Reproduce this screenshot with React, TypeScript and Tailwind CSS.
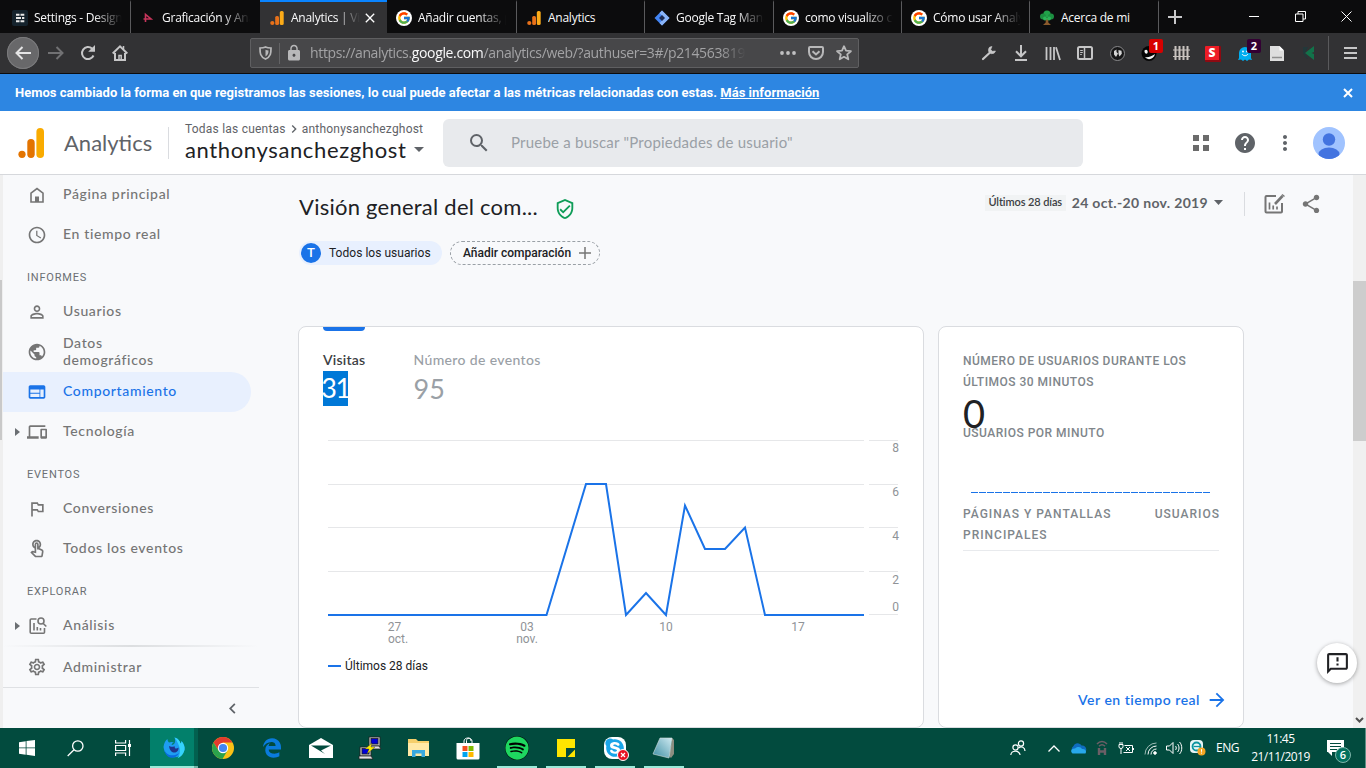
import React from "react";
import {
  MdAccessTime, MdArrowForward, MdChevronLeft, MdChevronRight, MdDevices, MdHelp, MdMoreVert,
  MdOutlineFeedback, MdOutlinedFlag, MdOutlineSettings, MdOutlineTouchApp, MdOutlineVerifiedUser,
  MdPersonOutline, MdPublic, MdSearch, MdShare, MdWeb, MdClose, MdLock,
} from "react-icons/md";
import { FcGoogle } from "react-icons/fc";
import { FaSpotify, FaSkype } from "react-icons/fa";
import { FaEdgeLegacy } from "react-icons/fa6";

const G = "font-['Lato','Open_Sans',sans-serif]";
const R = "font-['Roboto','Liberation_Sans',sans-serif]";
const S = "font-['Open_Sans','Noto_Sans',sans-serif]";

/* ---------- tab icons ---------- */
const GaSmall = () => (
  <svg width="14" height="16" viewBox="0 0 14 16"><circle cx="2.3" cy="13" r="2.1" fill="#e8711a" /><rect x="5.2" y="6" width="3.8" height="9" rx="1.5" fill="#e8711a" /><rect x="9.8" y="1" width="3.9" height="14" rx="1.5" fill="#fbab18" /></svg>
);
const SettingsFav = () => (
  <svg width="16" height="16"><rect width="16" height="16" rx="2" fill="#15232d" /><path d="M4 4.800h3.500M8.500 4.800h3.800M4 8h5M10 8h2.300M4 11.200h3.500M8.500 11.200h3.800" stroke="#e8e8e8" strokeWidth="2" /></svg>
);
const ArrowFav = () => (
  <svg width="16" height="16"><path d="M5.500 12V4.500L11 9H3.500" stroke="#c8355b" strokeWidth="1.600" fill="none" /></svg>
);
const GoogleFav = () => (
  <span className="flex h-4 w-4 items-center justify-center rounded-full bg-white"><FcGoogle size={14} /></span>
);
const TagFav = () => (
  <svg width="16" height="16"><path d="M8 .5 15.500 8 8 15.500.5 8z" fill="#4285f4" /><path d="M8 .5 15.500 8 8 15.500 5.500 13 10.500 8 5.500 3z" fill="#8ab4f8" /><path d="M8 5l3 3-3 3-3-3z" fill="#1c2c55" /></svg>
);
const TreeFav = () => (
  <svg width="16" height="16"><path d="M6.700 8h2.600v4.500L12 15H4l2.700-2.500z" fill="#8a5a2c" /><circle cx="8" cy="4" r="3.600" fill="#21a34a" /><circle cx="4" cy="6.500" r="3" fill="#1c8f40" /><circle cx="12" cy="6.500" r="3" fill="#1c8f40" /><circle cx="6" cy="8.500" r="2" fill="#2bb457" /><circle cx="10" cy="8.500" r="2" fill="#2bb457" /></svg>
);

type TabProps = { w: string; icon: React.ReactNode; text: string; active?: boolean; line?: boolean; first?: boolean; tw: string };
const Tab = ({ w, icon, text, active, line, first, tw }: TabProps) => (
  <div className={`${w} ${active ? "border-t-2 border-t-[#0a84ff] bg-[#323234]" : "border-t-2 border-t-transparent"} ${line ? "border-r border-r-[#5a5a5c]" : ""} ${first ? "pl-3" : "pl-[9px]"} flex h-[33px] shrink-0 items-center gap-1.5`}>
    <span className="flex h-4 w-4 shrink-0 items-center justify-center">{icon}</span>
    <span className={`${tw} overflow-hidden whitespace-nowrap text-[12px] leading-4 tracking-[-0.25px] text-[#f9f9fa]`}>{text}</span>
    {active && <MdClose size={16} className="-ml-1 text-white" />}
  </div>
);
const FADE = "w-[88px] [mask-image:linear-gradient(to_right,black_68%,transparent_100%)]";

const TabBar = () => (
  <div className={`${S} flex h-[33px] shrink-0 bg-[#0c0c0d]`}>
    <Tab w="w-[131px]" first line icon={<SettingsFav />} text="Settings - Design" tw={FADE} />
    <Tab w="w-[129px]" icon={<ArrowFav />} text="Graficación y Aná" tw={FADE} />
    <Tab w="w-[127px]" active icon={<GaSmall />} text="Analytics | Visi" tw="w-[69px] [mask-image:linear-gradient(to_right,black_66%,transparent_100%)]" />
    <Tab w="w-[130px]" line icon={<GoogleFav />} text="Añadir cuentas, pro" tw={FADE} />
    <Tab w="w-[128px]" line icon={<GaSmall />} text="Analytics" tw="w-[90px]" />
    <Tab w="w-[129px]" line icon={<TagFav />} text="Google Tag Mana" tw={FADE} />
    <Tab w="w-[128px]" line icon={<GoogleFav />} text="como visualizo co" tw={FADE} />
    <Tab w="w-[128px]" line icon={<GoogleFav />} text="Cómo usar Analy" tw={FADE} />
    <Tab w="w-[129px]" line icon={<TreeFav />} text="Acerca de mi" tw="w-[90px]" />
    <div className="flex flex-1 items-center">
      <svg className="ml-[9px]" width="14" height="14"><path d="M7 0v14M0 7h14" stroke="#c8c8c9" strokeWidth="2" /></svg>
      <svg className="ml-[67px]" width="10" height="12"><path d="M0 5.500h10" stroke="#fff" /></svg>
      <svg className="ml-[36px]" width="11" height="11"><path d="M.5 3h7.500v7.500H.5zM3 3V.5h7.500V8H8" stroke="#fff" fill="none" /></svg>
      <svg className="ml-[35px]" width="11" height="11"><path d="M.5.5l10 10M10.500.5l-10 10" stroke="#fff" /></svg>
    </div>
  </div>
);

const Slot = ({ children }: { children: React.ReactNode }) => (
  <div className="relative flex h-10 w-8 shrink-0 items-center justify-center">{children}</div>
);

const Toolbar = () => (
  <div className={`${S} flex h-[41px] shrink-0 items-center border-b border-[#0c0c0d] bg-[#323234]`}>
    <div className="ml-[7px] flex h-8 w-8 items-center justify-center rounded-full bg-[#68686a] shadow-[inset_0_0_0_1px_#7b7b7d]">
      <svg width="16" height="14" fill="none" stroke="#e4e4e5" strokeWidth="2"><path d="M16 7H1.500M7.500 1l-6 6 6 6" /></svg>
    </div>
    <div className="ml-px flex">
      <Slot><svg width="16" height="14" fill="none" stroke="#717173" strokeWidth="2"><path d="M0 7h14.500M8.500 1l6 6-6 6" /></svg></Slot>
      <Slot><svg width="16" height="16" fill="none" stroke="#c6c6c7" strokeWidth="2"><path d="M13.500 10.500A6 6 0 1 1 12 3.600l2 2" /><path d="M15 0v6.800H8.200z" fill="#c6c6c7" stroke="none" /></svg></Slot>
      <Slot><svg width="16" height="16" fill="none" stroke="#c6c6c7" strokeWidth="2"><path d="M.7 8.500 8 1.400l7.300 7.100" /><path d="M3 8v7h10V8" /><path d="M7 15v-4.500h2.200V15M11.500 1v3" strokeWidth="1.500" /></svg></Slot>
    </div>
    <div className="ml-[114px] flex h-[30px] w-[609px] items-center rounded-[2px] border border-[#5f5f61] bg-[#474749]">
      <svg className="ml-[8px]" width="13" height="14" fill="none"><path d="M6.500 1c2 1 3.500 1 5.500 1 0 5 0 8.500-5.500 11C1 10.500 1 7 1 2c2 0 3.500 0 5.500-1z" stroke="#b8b8b9" strokeWidth="1.700" /><path d="M6.500 3.800c1 .4 1.800.5 3 .6 0 2.800-.5 4.600-3 6z" fill="#b8b8b9" /></svg>
      <div className="ml-[7px] h-[21px] w-px bg-[#636365]" />
      <MdLock size={18} className="ml-[5px] text-[#b8b8b9]" />
      <div className="ml-[7px] w-[436px] overflow-hidden whitespace-nowrap text-[14px] leading-5 tracking-[-0.35px] text-[#a3a3a5] [mask-image:linear-gradient(to_right,black_94%,transparent_100%)]">
        https://analytics.<span className="text-[#f9f9fa]">google.com</span>/analytics/web/?authuser=3#/p214563819
      </div>
      <svg className="ml-[34px]" width="16" height="4" fill="#c0c0c1"><circle cx="2" cy="2" r="1.900" /><circle cx="8" cy="2" r="1.900" /><circle cx="14" cy="2" r="1.900" /></svg>
      <svg className="ml-[12px]" width="16" height="14" fill="none" stroke="#b8b8b9" strokeWidth="2"><path d="M2 1h12c.6 0 1 .4 1 1v4a7 7 0 0 1-14 0V2c0-.6.4-1 1-1z" /><path d="M4.500 5.200 8 8.500l3.500-3.300" /></svg>
      <svg className="ml-[12px]" width="16" height="16" fill="none" stroke="#b8b8b9" strokeWidth="1.800" strokeLinejoin="round"><path d="M8 1.200l2 4.500 4.900.5-3.700 3.200 1.100 4.900L8 11.800l-4.300 2.500 1.100-4.900L1.100 6.200 6 5.700z" /></svg>
    </div>
    <div className="ml-[114px] flex">
      <Slot><svg width="16" height="16" fill="none" stroke="#c6c6c7"><path d="M2 14l6.500-6" strokeWidth="2.200" strokeLinecap="round" /><path d="M11 1.500A3.600 3.600 0 1 0 14.500 6l-3 .3-1.800-1.700z" fill="#c6c6c7" strokeWidth=".6" /></svg></Slot>
      <Slot><svg width="14" height="16" fill="none" stroke="#c6c6c7" strokeWidth="2"><path d="M7 0v11M2 6.300l5 5 5-5M1 15h12" /></svg></Slot>
      <Slot><svg width="16" height="15" fill="none" stroke="#c6c6c7" strokeWidth="1.800"><path d="M1.500 1v13M5.500 1v13M9 1v13M11 1.200 15 14" /></svg></Slot>
      <Slot><svg width="16" height="14" fill="none" stroke="#c6c6c7"><rect x="1" y="1" width="14" height="12" rx="1.500" strokeWidth="2" /><path d="M7.500 1v12" strokeWidth="1.500" /><path d="M3.200 4.500h2.600M3.200 6.500h2.600M3.200 8.500h1.600" /></svg></Slot>
      <Slot><svg width="15" height="15"><circle cx="7.500" cy="7.500" r="7" fill="#171718" stroke="#8a8a8c" /><path d="M4 5l2.500-1.500V6L8 7.500 6 11 4 8.500zM8.500 4l3 .8.3 3L9.500 10.500 8.500 8z" fill="#d5d5d5" /></svg></Slot>
      <Slot>
        <svg width="16" height="16"><circle cx="8" cy="8.500" r="7.500" fill="#050505" /><path d="M3.500 5.500c2-2 4 .5 3 2.500S3 8 3.500 5.500zM4 12c3 .8 7-1 10-3-1 5-7 7-10 3z" fill="#f3f3f3" /></svg>
        <span className="absolute left-[16px] top-[6px] flex h-[14px] w-[14px] items-center justify-center rounded-[2px] bg-[#d70000] text-[11px] font-bold text-white">1</span>
      </Slot>
      <Slot><svg width="17" height="14" stroke="#c9c4c0" strokeWidth="2"><path d="M2.500 0v14M6.500 0v14M10.500 0v14M14.500 0v14" /><path d="M0 4h17M0 10.500h17" strokeWidth="1.200" /></svg></Slot>
      <Slot><div className="mt-px flex h-4 w-4 items-center justify-center rounded-[1px] border-b-2 border-r-2 border-[#8d0a12] bg-[#ee1c25] text-[12px] font-extrabold leading-none text-white">S</div></Slot>
      <Slot>
        <svg width="14" height="15"><path d="M1 7a6 6 0 0 1 12 0v5l1 2-3-.5-2 1.500-2-1.500-2 1.500-2-1.500L0 14l1-2z" fill="#00aef0" /><circle cx="5" cy="5.500" r=".9" fill="#fff" /><circle cx="9" cy="5.500" r=".9" fill="#fff" /><path d="M4 8c1.500 2.300 4.500 2.300 6 0" stroke="#fff" fill="none" /></svg>
        <span className="absolute left-[18px] top-[6px] flex h-[14px] w-[14px] items-center justify-center rounded-[2px] bg-[#330033] text-[11px] font-bold text-white">2</span>
      </Slot>
      <Slot><svg width="14" height="15"><path d="M0 0h9.500L14 4.500V15H0z" fill="#dedede" /><path d="M9.500 0v4.500H14z" fill="#fff" /><path d="M2 11.500h10" stroke="#8f8f8f" strokeWidth="1.500" /></svg></Slot>
      <Slot><svg width="12" height="16"><path d="M0 2h5L2 8l3 6-3-2-2-4z" fill="#22383a" /><path d="M2 8 11 1v6L8.500 8l2.500 1v6z" fill="#12734a" /></svg></Slot>
    </div>
    <div className="ml-[3px] h-[34px] w-px bg-[#5a5a5c]" />
    <svg className="ml-[15px]" width="13" height="12" stroke="#c6c6c7" strokeWidth="2"><path d="M0 1h13M0 6h13M0 11h13" /></svg>
  </div>
);

const Banner = () => (
  <div className={`${R} flex h-[37px] shrink-0 items-center justify-between bg-[#2d86e2] pl-[15px] pr-[12px] text-[13px] font-bold text-white`}>
    <span className="whitespace-nowrap tracking-[0.012px]">
      Hemos cambiado la forma en que registramos las sesiones, lo cual puede afectar a las métricas relacionadas con estas. <span className="underline">Más información</span>
    </span>
    <svg width="12" height="12" stroke="#fff" strokeWidth="2"><path d="M2 2l8 8M10 2l-8 8" /></svg>
  </div>
);

const Header = () => (
  <div className="flex h-16 shrink-0 items-center border-b border-[#d6d8dc] bg-white">
    <svg className="ml-[18px]" width="27" height="30"><circle cx="4" cy="26.300" r="3.600" fill="#e37400" /><rect x="9.300" y="11" width="7.400" height="19" rx="3.700" fill="#e37400" /><rect x="18.400" y="0" width="7.600" height="30" rx="3.800" fill="#f9ab00" /></svg>
    <span className={`${G} ml-[19px] w-[104px] text-[22px] text-[#5f6368]`}>Analytics</span>
    <div className="h-8 w-px bg-[#dadce0]" />
    <div className="-mt-[2px] ml-[16px] w-[258px] whitespace-nowrap">
      <div className={`${R} flex h-4 items-center text-[12px] text-[#5f6368]`}>
        <span className="tracking-[0.22px]">Todas las cuentas</span><MdChevronRight size={16} /><span className="tracking-[0.2px]">anthonysanchezghost</span>
      </div>
      <div className={`${G} flex h-[26px] items-center text-[22px] leading-[26px] text-[#202124]`}>
        <span className="tracking-[0.63px]">anthonysanchezghost</span>
        <svg className="ml-[7px]" width="10" height="5"><path d="M0 0h10L5 5z" fill="#5f6368" /></svg>
      </div>
    </div>
    <div className="flex h-12 w-[640px] items-center rounded-md bg-[#e8eaed]">
      <MdSearch size={24} className="ml-[24px] text-[#5f6368]" />
      <span className={`${G} -mt-px ml-5 whitespace-nowrap text-[15px] tracking-[0.22px] text-[#9aa0a6]`}>Pruebe a buscar "Propiedades de usuario"</span>
    </div>
    <svg className="ml-[110px]" width="16" height="16" fill="#6b6b6b"><path d="M0 0h6v6H0zM10 0h6v6h-6zM0 10h6v6H0zM10 10h6v6h-6z" /></svg>
    <MdHelp size={24} className="ml-6 text-[#5f6368]" />
    <MdMoreVert size={24} className="ml-4 text-[#5f6368]" />
    <svg className="ml-4" width="32" height="32"><defs><clipPath id="av"><circle cx="16" cy="16" r="16" /></clipPath></defs><g clipPath="url(#av)"><rect width="32" height="32" fill="#a0c3ff" /><circle cx="16" cy="12.500" r="6.200" fill="#4374e0" /><ellipse cx="16" cy="27" rx="10.500" ry="6.500" fill="#4374e0" /></g></svg>
  </div>
);

/* ---------- sidebar ---------- */
const HomeIcon = () => (
  <svg width="20" height="20" fill="none" stroke="currentColor" strokeWidth="1.600"><path d="M4 8.200 10 3.600l6 4.600V17H4z" /><path d="M8 17v-5.500h4V17z" fill="currentColor" stroke="none" /></svg>
);
const AnalysisIcon = () => (
  <svg width="20" height="20" fill="none" stroke="currentColor" strokeWidth="1.600"><path d="M9.500 3H4.300C3.600 3 3.200 3.400 3.200 4v12.200c0 .6.400 1 1.100 1h12.200c.6 0 1-.4 1-1V12" /><path d="M7 7v7.500M10.300 11v3.500M13.500 12v2.500" /><circle cx="14" cy="5" r="3" /><path d="M16 7.200l3.300 3.300" /></svg>
);
const Item = ({ icon, text, active, arrow, low }: { icon: React.ReactNode; text: React.ReactNode; active?: boolean; arrow?: boolean; low?: boolean }) => (
  <div className={`${active ? "rounded-r-full bg-[#e8f0fe] text-[#1a73e8]" : "text-[#757575]"} mr-2 flex h-10 shrink-0 items-center`}>
    <span className="flex w-6 items-center pl-[12px]">{arrow && <svg width="5" height="8"><path d="M0 0l5 4-5 4z" fill="#6b6f73" /></svg>}</span>
    <span className="flex w-9 shrink-0">{icon}</span>
    <span className={`${low ? "-mt-[2px]" : "-mt-[3px]"} text-[14px] font-medium leading-[17px] tracking-[0.65px]`}>{text}</span>
  </div>
);
const Section = ({ children }: { children: string }) => (
  <div className={`${R} flex h-[37px] shrink-0 items-center pl-6 pt-[9px] text-[11px] tracking-[0.8px] text-[#6b6f73]`}>{children}</div>
);

const Sidebar = () => (
  <div className={`${G} flex w-[256px] shrink-0 flex-col`}>
    <Item icon={<HomeIcon />} text="Página principal" />
    <Item icon={<MdAccessTime size={20} />} text="En tiempo real" />
    <Section>INFORMES</Section>
    <Item icon={<MdPersonOutline size={20} />} text="Usuarios" />
    <Item low icon={<MdPublic size={20} />} text={<>Datos<br />demográficos</>} />
    <Item active icon={<MdWeb size={20} />} text="Comportamiento" />
    <Item arrow icon={<MdDevices size={20} />} text="Tecnología" />
    <Section>EVENTOS</Section>
    <Item icon={<MdOutlinedFlag size={20} />} text="Conversiones" />
    <Item icon={<MdOutlineTouchApp size={20} />} text="Todos los eventos" />
    <Section>EXPLORAR</Section>
    <Item arrow icon={<AnalysisIcon />} text="Análisis" />
    <div className="-mt-px h-[2px] shrink-0 bg-gradient-to-r from-transparent via-[#dcdee0] to-transparent" />
    <Item low icon={<MdOutlineSettings size={20} />} text="Administrar" />
    <div className="flex flex-1 items-center justify-end border-t border-[#dfe1e4] pr-[16px]"><MdChevronLeft size={21} className="text-[#5f6368]" /></div>
  </div>
);

/* ---------- main ---------- */
const ChartEdit = () => (
  <svg width="22" height="22" fill="none" stroke="#757575" strokeWidth="2"><path d="M13 3H3.500c-.5 0-1 .4-1 1v14.500c0 .6.4 1 1 1H18c.6 0 1-.4 1-1V10" /><path d="M6.500 9.500v7M10.200 12.500v4M14 13.500v3" strokeWidth="1.700" /><path d="M12 11l7.500-8" strokeWidth="2.600" /><path d="M19 1.500l2.500 2" strokeWidth="1.500" /></svg>
);

const GRID = [440.5, 484.5, 527.5, 571.5, 614.5];
const YL: [string, number][] = [["8", 452], ["6", 496], ["4", 540], ["2", 584], ["0", 611]];
const XL: [string, number, number][] = [["27", 394.5, 631], ["oct.", 398, 643], ["03", 527, 631], ["nov.", 527, 643], ["10", 666, 631], ["17", 798, 631]];

const Chart = () => (
  <svg className="mt-[24px] block shrink-0" width="580" height="220" viewBox="323 430 580 220">
    {GRID.map((y) => <path key={y} d={`M328 ${y}H864M869 ${y}H898`} stroke="#e6e7e9" />)}
    <g className={R} fontSize="12" fill="#8f9397">
      {YL.map(([t, y]) => <text key={t} x="899" y={y} textAnchor="end">{t}</text>)}
      {XL.map(([t, x, y]) => <text key={t + x} x={x} y={y} textAnchor="middle">{t}</text>)}
    </g>
    <polyline fill="none" stroke="#1a73e8" strokeWidth="2" points="328,615 546.500,615 586,484 606,484 626,615 646,593 666,615 685,505.500 705,549 725,549 745,527.500 765,615 864,615" />
  </svg>
);

const Main = () => (
  <div className="flex flex-1 flex-col pl-[39px]">
    <div className="flex h-[66px] shrink-0 items-start pr-[31px]">
      <span className={`${G} ml-px mt-[15px] whitespace-nowrap text-[22px] leading-[34px] tracking-[0.24px] text-[#202124]`}>Visión general del com...</span>
      <MdOutlineVerifiedUser size={22} className="ml-[16px] mt-[23px] text-[#0f9d58]" />
      <div className="flex-1" />
      <div className="mt-[14px] flex h-[30px] items-center">
        <span className={`${G} -mt-[3px] flex h-4 w-[81px] items-center justify-center whitespace-nowrap bg-[#f1f3f4] text-[11px] font-semibold tracking-[-0.1px] text-[#3c4043]`}>Últimos 28 días</span>
        <span className={`${G} -mt-[3px] ml-[6px] whitespace-nowrap text-[14px] font-bold tracking-[0.33px] text-[#5f6368]`}>24 oct.-20 nov. 2019</span>
        <svg className="-mt-[3px] ml-[6px]" width="9" height="5"><path d="M0 0h9L4.500 5z" fill="#5f6368" /></svg>
        <div className="-mt-px ml-[21px] h-6 w-px bg-[#dadce0]" />
        <div className="ml-[18px]"><ChartEdit /></div>
        <MdShare size={22} className="ml-[15px] text-[#757575]" />
      </div>
    </div>
    <div className={`${R} flex shrink-0 gap-2 text-[12px]`}>
      <div className="ml-px flex h-6 w-[143px] items-center rounded-full bg-[#e8f0fe] pl-[2px] text-[#202124]">
        <span className="flex h-5 w-5 items-center justify-center rounded-full bg-[#1a73e8] text-[13px] font-medium text-white">T</span>
        <span className="ml-2 tracking-[0.03px]">Todos los usuarios</span>
      </div>
      <div className="flex h-6 w-[150px] items-center rounded-full border border-dashed border-[#9aa0a6] pl-3 font-medium text-[#202124]">
        <span>Añadir comparación</span>
        <svg className="ml-2" width="12" height="12"><path d="M6 0v12M0 6h12" stroke="#757575" strokeWidth="1.500" /></svg>
      </div>
    </div>
    <div className="mt-[61px] flex h-[402px] shrink-0 gap-[14px]">
      <div className="flex w-[626px] shrink-0 flex-col rounded-lg border border-[#dadce0] bg-white pl-6">
        <div className={`${G} flex shrink-0 gap-12`}>
          <div className="flex w-[42.500px] flex-col items-start">
            <div className="h-1 w-[42px] rounded-b bg-[#1a73e8]" />
            <span className="mt-[19px] text-[14px] font-semibold leading-5 tracking-[0.2px] text-[#3c4043]">Visitas</span>
            <span className="mt-px flex h-[35px] w-[25px] items-center justify-center bg-[#0078d7] text-[27px] tracking-[-1.500px] text-white">31</span>
          </div>
          <div className="flex flex-col whitespace-nowrap pt-[23px] text-[#9aa0a6]">
            <span className="text-[14px] font-medium leading-5 tracking-[0.36px]">Número de eventos</span>
            <span className="mt-[2px] flex h-[35px] items-center text-[27px]">95</span>
          </div>
        </div>
        <div className="-mt-px"><Chart /></div>
        <div className={`${R} mt-[6px] flex h-5 items-center gap-1 pl-[5px] text-[12px] text-[#202124]`}>
          <span className="h-[2px] w-[13px] bg-[#1a73e8]" />Últimos 28 días
        </div>
      </div>
      <div className={`${R} flex w-[306px] shrink-0 flex-col rounded-lg border border-[#dadce0] bg-white px-6 pt-[24px] text-[12px] font-medium leading-[21px] tracking-[0.49px] text-[#80868b]`}>
        <div className="whitespace-nowrap">NÚMERO DE USUARIOS DURANTE LOS<br />ÚLTIMOS 30 MINUTOS</div>
        <div className={`${G} h-[30px] text-[38px] font-normal leading-[41px] text-[#202124]`}>0</div>
        <div>USUARIOS POR MINUTO</div>
        <svg className="ml-2 mt-[48px] shrink-0" width="240" height="2"><path d="M0 .5h240" stroke="#1a73e8" strokeWidth="1" strokeDasharray="7 1" /></svg>
        <div className="mt-[10px] flex justify-between border-b border-[#e8eaed] pb-[4px] tracking-[1px]"><span>PÁGINAS Y PANTALLAS<br />PRINCIPALES</span><span className="-mr-px">USUARIOS</span></div>
        <div className="flex-1" />
        <div className={`${G} -mr-[9px] mb-[16px] flex items-center justify-end gap-[6px] whitespace-nowrap text-[14px] font-semibold tracking-[0.5px] text-[#1a73e8]`}><span className="-mt-[2px]">Ver en tiempo real</span><MdArrowForward size={22} /></div>
      </div>
    </div>
  </div>
);

/* ---------- taskbar ---------- */
const TaskSlot = ({ children, run }: { children: React.ReactNode; run?: boolean }) => (
  <div className="flex h-10 w-[49px] shrink-0 flex-col items-center">
    <div className="flex h-[38px] items-center pt-[2px]">{children}</div>
    {run && <div className="h-[2px] w-10 bg-[#9aead9]" />}
  </div>
);
const Firefox = () => (
  <svg width="24" height="24"><path d="M1.500 11C2 7 3.500 4.500 5.500 3c0 1.500.5 2.500 1.500 3.500 2-.8 3.500-.8 5 .3-1.500.3-2.500 1-2.300 2.200C13 9 14 5 12.500 1.500c4 1 5.500 4 6 6 .8-.7 1-1.500 1-2.500 2.500 3 3.500 6 3 9A10.800 10.800 0 0 1 1.500 11z" fill="#1e9df2" /><path d="M12.500 1.500c4 1 5.500 4 6 6 .8-.7 1-1.500 1-2.500 2.500 3 3.500 6 3 9-.8 4-3.500 7-7 8.300C20 17 18 9 12.500 1.500z" fill="#35d3fb" /><path d="M7 10c2.500 1.500 4 0 6 .5-1 2 1.500 3 3.500 1C17 18 8 19 7 10z" fill="#20348c" /><path d="M2 13c2 7 10 8 15 4-3 7-13 7-15-4z" fill="#0a6be0" /></svg>
);
const Chrome = () => (
  <svg width="22" height="22" viewBox="-11 -11 22 22"><circle r="11" fill="#fbc116" /><path d="M-9.500-5.500A11 11 0 0 1 9.500-5.500H0L-4.500 2.500z" fill="#e33b2e" /><path d="M-9.500-5.500A11 11 0 0 0-.5 11L4.500 2.500-4.500 2.500z" fill="#2ba24c" /><circle r="5.200" fill="#fff" /><circle r="4.100" fill="#4285f4" /></svg>
);
const Putty = () => (
  <svg width="24" height="24"><g stroke="#222" strokeWidth=".8"><rect x="11" y="1" width="11" height="9" fill="#c9c9c9" /><rect x="13" y="2.500" width="7" height="5.500" fill="#0000d8" /><path d="M10 10h11l2 3H12z" fill="#e4e4e4" /><rect x="2" y="11" width="11" height="9" fill="#c9c9c9" /><rect x="4" y="12.500" width="7" height="5.500" fill="#0000d8" /><path d="M1 20h12l2 3H1z" fill="#e4e4e4" /></g><path d="M14 7l-7 6h4l-2 5 8-7h-4z" fill="#ffee00" stroke="#333" strokeWidth=".4" /></svg>
);
const Explorer = () => (
  <svg width="22" height="20"><path d="M0 1h8l2 2h11v15H0z" fill="#f5cf6b" /><path d="M0 5h21v13H0z" fill="#ffe9a6" /><path d="M4 19v-7h13v7h-3.500v-3.500h-6V19z" fill="#3aa9e0" /></svg>
);
const Store = () => (
  <svg width="24" height="24"><path d="M8 8V5c0-4 8-4 8 0v3M10.500 8V4.500C11 1 15 2 15 5" stroke="#fff" fill="none" /><path d="M.5 7h23v15a1.500 1.500 0 0 1-1.500 1.500H2A1.500 1.500 0 0 1 .5 22z" fill="#fff" /><path d="M6.500 10h5v5h-5z" fill="#f25022" /><path d="M12.500 10h5v5h-5z" fill="#7fba00" /><path d="M6.500 16h5v5h-5z" fill="#00a4ef" /><path d="M12.500 16h5v5h-5z" fill="#ffb900" /></svg>
);

const Tray = ({ children, w = "w-6" }: { children: React.ReactNode; w?: string }) => (
  <div className={`${w} flex h-10 shrink-0 items-center justify-center`}>{children}</div>
);

const Taskbar = () => (
  <div className={`${S} flex h-10 shrink-0 bg-[#024b3e] pl-[2px]`}>
    <TaskSlot><svg width="16" height="16" fill="#fff"><path d="M0 2.200 6.700 1.200v6.300H0zM7.500 1.100 16 0v7.500H7.500zM0 8.300h6.700v6.400L0 13.700zM7.500 8.300H16V16l-8.500-1.200z" /></svg></TaskSlot>
    <TaskSlot><svg width="17" height="17" fill="none" stroke="#fff" strokeWidth="1.300"><circle cx="10.800" cy="6" r="5.200" /><path d="M7 9.800.7 16" /></svg></TaskSlot>
    <TaskSlot><svg className="-ml-[3px]" width="17" height="16" fill="none" stroke="#fff" strokeWidth="1.200"><path d="M.6 0v3h10V0M.6 16v-3h10v3M.6 5.500h10v5H.6zM14.500 0v16" /><path d="M13 4h3v3h-3z" fill="#fff" stroke="none" /></svg></TaskSlot>
    <div className="flex h-10 w-[49px] shrink-0">
      <div className="ml-px flex w-[44px] items-center justify-center border-b-2 border-[#9aead9] bg-[#02806b] pl-[3px] pt-[2px]"><Firefox /></div>
      <div className="w-1 border-b-2 border-[#72b5a8] bg-[#02604f]" />
    </div>
    <TaskSlot><Chrome /></TaskSlot>
    <TaskSlot><FaEdgeLegacy size={20} color="#0a7bdc" /></TaskSlot>
    <TaskSlot><svg width="24" height="20"><path d="M0 7 12 0l12 7v13H0z" fill="#fff" /><path d="M2 7.500h20L12 12.500l4 3.500z" fill="#024b3e" /></svg></TaskSlot>
    <TaskSlot><Putty /></TaskSlot>
    <TaskSlot><Explorer /></TaskSlot>
    <TaskSlot><Store /></TaskSlot>
    <TaskSlot run><span className="rounded-full bg-black"><FaSpotify size={24} color="#1ed760" /></span></TaskSlot>
    <TaskSlot run><svg width="18" height="18"><path d="M0 0h18v9H9v9H0z" fill="#ffe500" /><path d="M9 9h9l-9 9z" fill="#024b3e" /><path d="M10.500 18 18 10.500V18z" fill="#ffe500" /></svg></TaskSlot>
    <TaskSlot run>
      <span className="relative"><span className="flex rounded-[8px] bg-white"><FaSkype size={22} color="#1aa5e8" /></span>
        <svg className="absolute left-[13px] top-[12px]" width="12" height="12"><circle cx="6" cy="6" r="5.500" fill="#e81123" stroke="#fff" /><path d="M4 4l4 4M8 4l-4 4" stroke="#fff" strokeWidth="1.200" /></svg></span>
    </TaskSlot>
    <TaskSlot run><svg width="24" height="22"><defs><linearGradient id="np" x1="0" y1="1" x2="1" y2="0"><stop offset="0" stopColor="#3d8ea3" /><stop offset="1" stopColor="#cfeaf1" /></linearGradient></defs><path d="M8 1h12l2 2v14l-3 4-2-2 3-15z" fill="#8c8d80" /><path d="M8 1h12l-3 20L1 17z" fill="url(#np)" stroke="#d5dedd" strokeWidth=".6" /></svg></TaskSlot>
    <div className="flex-1" />
    <Tray><svg width="16" height="16" fill="none" stroke="#fff" strokeWidth="1.200"><circle cx="11" cy="3.500" r="2.600" /><path d="M8.500 8c3-2.500 6.500-.5 6.500 3" /><circle cx="5.500" cy="7.500" r="2.600" /><path d="M.8 15c.5-5 8.500-5 9.300 0" /></svg></Tray>
    <Tray w="ml-[12px] w-6"><svg width="12" height="7" fill="none" stroke="#fff" strokeWidth="1.300"><path d="M.5 6.500 6 1l5.500 5.500" /></svg></Tray>
    <Tray><svg width="17" height="11"><path d="M4 10a4 4 0 0 1-.5-7C5-1 10-.5 11.500 2.500 16 2 18 7 14.500 10z" fill="#0f6cbd" /><path d="M2.500 10.500C-.5 8 2 5 5 5.500 8 3 11 4 12 6c3-.5 5 2 3.500 4.500z" fill="#28a8ea" /></svg></Tray>
    <Tray><svg width="12" height="16" fill="none" stroke="#6b5f66" strokeWidth="1.500"><path d="M1 4c3-3.500 7-3.500 10 0M3 6.300c2-2 4-2 6 0" /><path d="M3 8v7M9 8v7M3 11.500h6" strokeWidth="2.400" /></svg></Tray>
    <Tray><svg width="16" height="12" fill="none" stroke="#fff"><path d="M6.500 3.500h8v7h-9M1 2.500h4v2.500c0 2-4 2-4 0zM2 0v2.500M4 0v2.500M3 6.500V12M8 5l4 4M12 5 8 9M15.500 6v2" /></svg></Tray>
    <Tray w="w-[25px]"><svg width="13" height="13" fill="none" stroke="#fff"><path d="M1 12.500A11.500 11.500 0 0 1 12.500 1" stroke="#9dbdb7" /><path d="M4 12.500A8.500 8.500 0 0 1 12.500 4M7 12.500A5.500 5.500 0 0 1 12.500 7" /><circle cx="11" cy="11" r="1.300" fill="#fff" /></svg></Tray>
    <Tray w="w-[23px]"><svg width="17" height="14" fill="none" stroke="#fff"><path d="M.5 5h3L7 1.500v11L3.500 9h-3zM9.500 5c1 1 1 3 0 4M11.500 3c2 2 2 6 0 8M13.500 1c3 3 3 9 0 12" /></svg></Tray>
    <Tray><svg width="16" height="16"><rect width="13" height="13" rx="4" fill="#e8f6f6" /><circle cx="6.500" cy="6.500" r="4" fill="none" stroke="#0d96a0" strokeWidth="1.800" /><path d="M3.500 6.500H10" stroke="#0d96a0" strokeWidth="1.300" /><circle cx="11.500" cy="11.500" r="4" fill="#f5a623" /><path d="M11.500 9.200v2.600M11.500 12.600v1" stroke="#fff" /></svg></Tray>
    <Tray w="w-[35px]"><span className="text-[12px] tracking-[-0.4px] text-white">ENG</span></Tray>
    <div className="ml-[3px] flex h-10 w-[65px] shrink-0 flex-col items-center justify-center whitespace-nowrap text-[12px] leading-[18px] tracking-[-0.5px] text-white"><span>11:45</span><span>21/11/2019</span></div>
    <div className="relative ml-[14px] mr-[14px] w-6 shrink-0">
      <svg className="mt-[11px]" width="18" height="18"><path d="M0 1h17v12H5v4l-4-4H0z" fill="#fff" /><path d="M3 4.500h11M3 7.500h11M3 10.500h7" stroke="#024b3e" strokeWidth="1.200" /></svg>
      <span className="absolute left-[8px] top-[19px] flex h-4 w-4 items-center justify-center rounded-full border border-[#7fb5aa] bg-[#02705e] text-[11px] font-semibold text-white">6</span>
    </div>
    <div className="w-px bg-[#5f8f86]" />
  </div>
);

export default function App() {
  return (
    <div className="relative flex h-[768px] w-[1366px] flex-col overflow-hidden bg-[#f8f9fa]">
      <TabBar />
      <Toolbar />
      <Banner />
      <Header />
      <div className="flex h-[553px] shrink-0 overflow-hidden bg-[#f8f9fb]">
        <div className="w-[3px] shrink-0 bg-[#efefef] pt-[105px]"><div className="h-40 w-[2px] bg-[#c9c9c9]" /></div>
        <Sidebar />
        <Main />
        <div className="flex w-[13px] shrink-0 flex-col items-center justify-between bg-[#f0f0f0] pt-[106px]">
          <div className="h-40 w-full bg-[#cdcdcd]" />
          <svg className="mb-[4px]" width="9" height="7" fill="none" stroke="#505050" strokeWidth="2"><path d="M1 1l3.500 3.500L8 1" /></svg>
        </div>
      </div>
      <Taskbar />
      <div className="absolute left-[1317px] top-[643px] flex h-10 w-10 items-center justify-center rounded-full bg-white shadow-[0_1px_4px_rgba(0,0,0,0.35)]">
        <MdOutlineFeedback size={25} className="text-[#202124]" />
      </div>
    </div>
  );
}
